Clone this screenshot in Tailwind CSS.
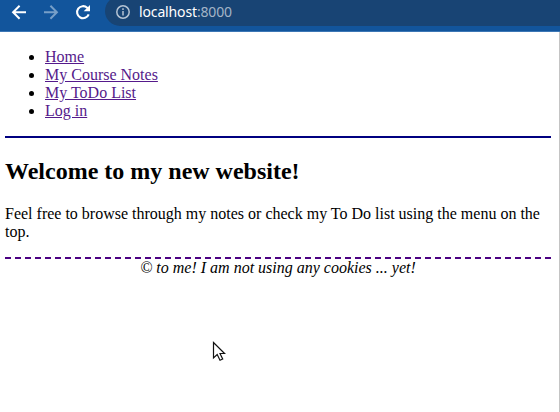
<!DOCTYPE html>
<html lang="en">
<head>
<meta charset="utf-8">
<title>localhost:8000</title>
<script src="https://cdn.jsdelivr.net/npm/@tailwindcss/browser@4"></script>
</head>
<body class="w-[560px] h-[412px] overflow-hidden bg-white flex flex-col text-black">
<header class="h-8 shrink-0 bg-[#12559c] border-b border-[#3c77b5] flex items-start overflow-hidden">
  <nav class="flex pl-2 gap-2 text-white">
    <svg class="w-6 h-6" viewBox="0 0 24 24" fill="none" stroke="currentColor" stroke-width="2"><path d="M18 12.3H5.5M11.6 5.8L5.1 12.3L11.6 18.8"/></svg>
    <svg class="w-6 h-6 text-[#779fc8]" viewBox="0 0 24 24" fill="none" stroke="currentColor" stroke-width="2"><path d="M4 12.3h12.5M10.4 5.8l6.5 6.5l-6.5 6.5"/></svg>
    <svg class="w-6 h-6" viewBox="0 0 24 24" fill="none" stroke="currentColor" stroke-width="2.1"><path d="M16.7 14.3A6 6 0 1 1 15.2 7.8L16 8.6"/><path d="M18 5v6.3h-6.3z" fill="currentColor" stroke="none"/></svg>
  </nav>
  <div class="ml-[9px] -mt-1 h-[30px] grow bg-[#184474] rounded-l-full flex items-center pl-[11px] pt-[2px]">
    <svg class="w-[14px] h-[14px]" viewBox="0 0 14 14" fill="none" stroke="#b5c4d4" stroke-width="1.5"><circle cx="7" cy="7" r="6.2"/><path d="M7 6v4.5M7 3.3v1.6"/></svg>
    <span class="ml-[9px] font-['Noto_Sans',sans-serif] text-[14px] tracking-[-0.14px] leading-5 text-white whitespace-nowrap">localhost<span class="text-[#a3b4c7]">:8000</span></span>
  </div>
</header>
<main class="grow border-r border-[#c4c4c4] pl-[5px] pr-2 pt-4 font-['Liberation_Serif',serif] text-base leading-[18px]">
  <ul class="list-disc pl-10 pb-4 text-black">
    <li><a href="#" class="text-[#551a8b] underline">Home</a></li>
    <li><a href="#" class="text-[#551a8b] underline">My Course Notes</a></li>
    <li><a href="#" class="text-[#551a8b] underline">My ToDo List</a></li>
    <li><a href="#" class="text-[#551a8b] underline">Log in</a></li>
  </ul>
  <div class="border-t-2 border-[#000080] pt-5">
    <h2 class="text-2xl leading-[27px] font-bold">Welcome to my new website!</h2>
    <p class="mt-5 mb-4">Feel free to browse through my notes or check my To Do list using the menu on the top.</p>
  </div>
  <footer class="border-t-2 border-dashed border-[#4b0082] text-center italic">© to me! I am not using any cookies ... yet!</footer>
</main>
<svg class="absolute left-[212px] top-[341px] w-[14px] h-[21px]" viewBox="0 0 14 21" fill="#fff" stroke="#111" stroke-width="1.2"><path d="M1.5 1.5V17L5.2 13.6L8 19.3L10.7 18L8 12.5H12.6Z"/></svg>
</body>
</html>
